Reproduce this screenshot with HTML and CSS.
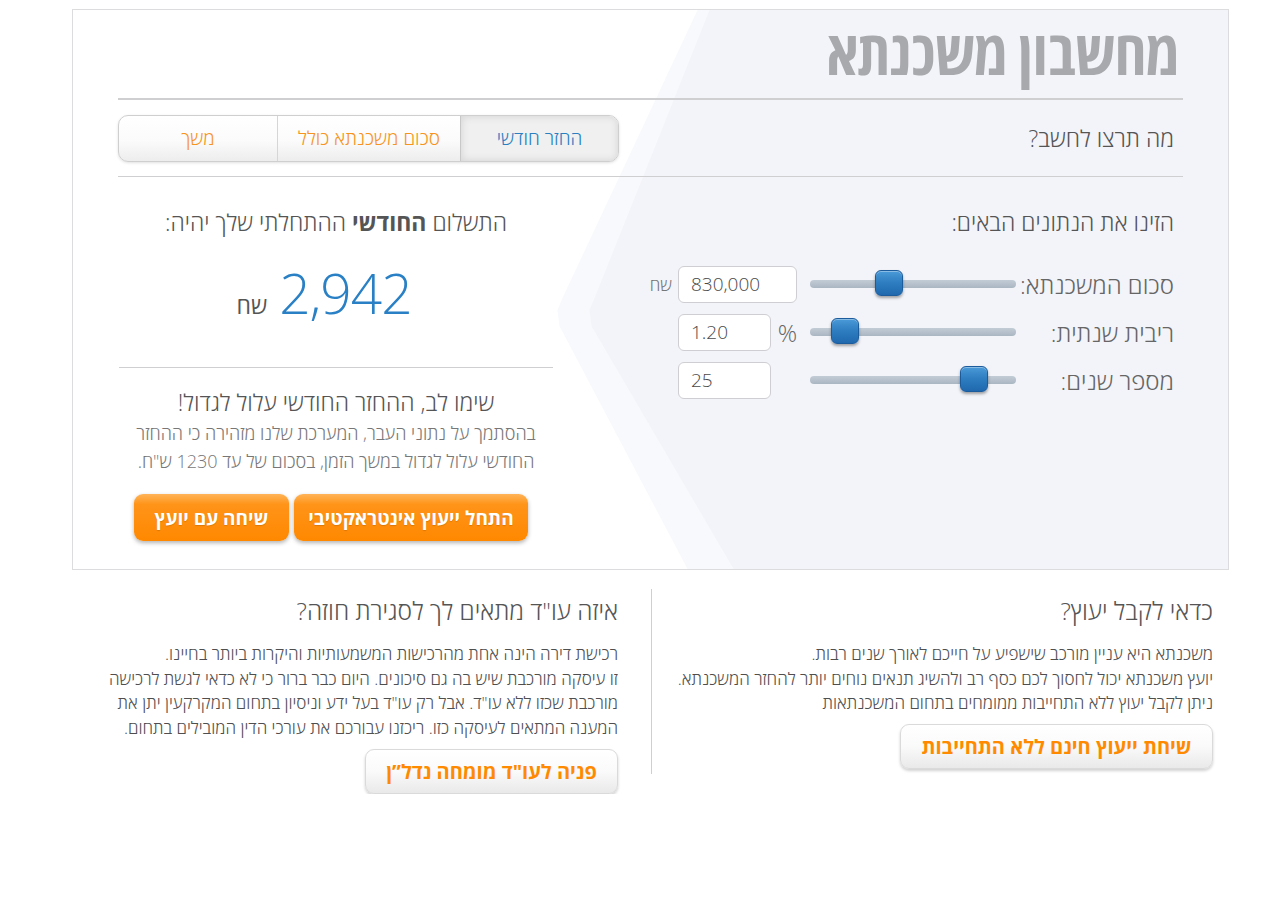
FILE: index.html
```html
<!DOCTYPE html>
<html lang="he" dir="rtl">
<head>
<meta charset="utf-8">
<title>מחשבון משכנתא</title>
<link rel="stylesheet" href="styles.css">
</head>
<body>
<div class="calc">
  <svg class="calc-bg" viewBox="0 0 1154 559" preserveAspectRatio="none" aria-hidden="true">
    <polygon points="624,0 1154,0 1154,559 614,559 486,316 484,300 490,286" fill="#f8f9fc"/>
    <polygon points="636,0 1154,0 1154,559 660,559 518,316 516,300 522,286" fill="#f3f4f9"/>
  </svg>

  <header class="calc-head">
    <h1 class="calc-title">מחשבון משכנתא</h1>
  </header>

  <div class="mode-row">
    <div class="mode-label">מה תרצו לחשב?</div>
    <div class="tabs">
      <div class="tab tab-active">החזר חודשי</div>
      <div class="tab tab-mid">סכום משכנתא כולל</div>
      <div class="tab tab-last">משך</div>
    </div>
  </div>

  <div class="calc-body">
    <section class="inputs">
      <h2 class="sec-title">הזינו את הנתונים הבאים:</h2>

      <div class="field">
        <div class="field-label">סכום המשכנתא:</div>
        <div class="slider"><div class="thumb" style="left:65px"></div></div>
        <div class="slot">
          <input class="num" type="text" value="830,000">
        </div>
        <span class="unit-small">שח</span>
      </div>

      <div class="field">
        <div class="field-label">ריבית שנתית:</div>
        <div class="slider"><div class="thumb" style="left:21px"></div></div>
        <div class="slot">
          <span class="unit-pct">%</span>
          <input class="num num-short" type="text" value="1.20">
        </div>
      </div>

      <div class="field">
        <div class="field-label">מספר שנים:</div>
        <div class="slider"><div class="thumb" style="left:150px"></div></div>
        <div class="slot slot-end">
          <input class="num num-short" type="text" value="25">
        </div>
      </div>
    </section>

    <section class="result">
      <h2 class="sec-title sec-center">התשלום <b>החודשי</b> ההתחלתי שלך יהיה:</h2>
      <div class="amount">
        <span class="amount-num">2,942</span>
        <span class="amount-cur">שח</span>
      </div>
      <div class="notice">
        <div class="notice-title">שימו לב, ההחזר החודשי עלול לגדול!</div>
        <p class="notice-text">בהסתמך על נתוני העבר, המערכת שלנו מזהירה כי ההחזר<br>החודשי עלול לגדול במשך הזמן, בסכום של עד 1230 ש"ח.</p>
        <div class="actions">
          <a class="btn-orange btn-wide" href="#">התחל ייעוץ אינטראקטיבי</a>
          <a class="btn-orange btn-narrow" href="#">שיחה עם יועץ</a>
        </div>
      </div>
    </section>
  </div>
</div>

<div class="info">
  <section class="info-col info-right">
    <h3 class="info-title">כדאי לקבל יעוץ?</h3>
    <p class="info-text">משכנתא היא עניין מורכב שישפיע על חייכם לאורך שנים רבות.<br>יועץ משכנתא יכול לחסוך לכם כסף רב ולהשיג תנאים נוחים יותר להחזר המשכנתא.<br>ניתן לקבל יעוץ ללא התחייבות ממומחים בתחום המשכנתאות</p>
    <a class="btn-white btn-consult" href="#">שיחת ייעוץ חינם ללא התחייבות</a>
  </section>
  <section class="info-col info-left">
    <h3 class="info-title">איזה עו"ד מתאים לך לסגירת חוזה?</h3>
    <p class="info-text">רכישת דירה הינה אחת מהרכישות המשמעותיות והיקרות ביותר בחיינו.<br>זו עיסקה מורכבת שיש בה גם סיכונים. היום כבר ברור כי לא כדאי לגשת לרכישה<br>מורכבת שכזו ללא עו"ד. אבל רק עו"ד בעל ידע וניסיון בתחום המקרקעין יתן את<br>המענה המתאים לעיסקה כזו. ריכזנו עבורכם את עורכי הדין המובילים בתחום.</p>
    <a class="btn-white btn-lawyer" href="#">פניה לעו"ד מומחה נדל”ן</a>
  </section>
</div>
</body>
</html>
```

FILE: styles.css
```css
* { box-sizing: border-box; }

html, body {
  margin: 0;
  padding: 0;
  background: #ffffff;
}

body {
  font-family: "Open Sans", "Noto Sans", "DejaVu Sans", sans-serif;
  color: #555;
  padding-top: 9px;
}

.calc {
  position: relative;
  width: 1157px;
  margin-left: 72px;
  margin-right: auto;
  border: 1px solid #dcdcdf;
  padding: 0 45px 28px 45px;
  background: #ffffff;
}

.calc-bg {
  position: absolute;
  left: 0;
  top: 0;
  width: 100%;
  height: 100%;
  z-index: 0;
}

.calc-head, .mode-row, .calc-body {
  position: relative;
  z-index: 1;
}

.calc-head {
  height: 90px;
  border-bottom: 2px solid #cfcfd2;
  display: flex;
  align-items: center;
  padding-right: 4px;
}

.calc-title {
  margin: 0;
  font-size: 62px;
  line-height: 80px;
  font-weight: 700;
  font-stretch: 87.5%;
  color: #a8a9ad;
  white-space: nowrap;
  padding-bottom: 6px;
}

.mode-row {
  height: 77px;
  border-bottom: 1px solid #cfcfd2;
  display: flex;
  align-items: center;
  justify-content: space-between;
}

.mode-label {
  padding-right: 9px;
  font-size: 23px;
  font-weight: 300;
  color: #555;
}

.tabs {
  display: flex;
  width: 501px;
  height: 47px;
  border: 1px solid #cfcfcf;
  border-radius: 10px;
  overflow: hidden;
  box-shadow: 0 1px 3px rgba(0,0,0,0.12);
  background: linear-gradient(#ffffff 0%, #fbfbfb 55%, #ededed 100%);
}

.tab {
  display: flex;
  align-items: center;
  justify-content: center;
  font-size: 19px;
  font-weight: 300;
  color: #f7941d;
}

.tab-active {
  width: 158px;
  color: #2a7fc0;
  background: #f0f0f0;
  box-shadow: inset 0 0 8px rgba(0,0,0,0.13);
  border-left: 1px solid #c8c8c8;
}

.tab-mid {
  width: 183px;
  border-left: 1px solid #d6d6d6;
}

.tab-last {
  flex: 1;
}

.calc-body {
  display: grid;
  grid-template-columns: 542px 434px;
  column-gap: 88px;
}

.inputs {
  padding-top: 28px;
}

.sec-title {
  margin: 0;
  padding-right: 9px;
  font-size: 23px;
  line-height: 34px;
  font-weight: 300;
  color: #555;
}

.sec-title b {
  font-weight: 700;
}

.sec-center {
  text-align: center;
  padding-right: 0;
}

.inputs .sec-title {
  margin-bottom: 21px;
}

.field {
  display: flex;
  align-items: center;
  height: 48px;
}

.field-label {
  width: 157px;
  padding-right: 9px;
  font-size: 24px;
  font-weight: 300;
  color: #666;
  white-space: nowrap;
}

.slider {
  position: relative;
  width: 206px;
  height: 8px;
  margin-right: 10px;
  border-radius: 4px;
  background: linear-gradient(#c2ccd6, #aab6c3);
}

.thumb {
  position: absolute;
  top: -10px;
  width: 28px;
  height: 26px;
  border-radius: 6px;
  border: 1px solid #1d5c9c;
  background: linear-gradient(#4b9ad8 0%, #2f7fc2 45%, #2068ae 100%);
  box-shadow: 0 2px 3px rgba(0,0,0,0.35), inset 0 1px 0 rgba(255,255,255,0.35);
}

.slot {
  display: flex;
  align-items: center;
  justify-content: space-between;
  width: 119px;
  margin-right: 13px;
}

.slot-end {
  justify-content: flex-end;
}

.num {
  display: block;
  width: 119px;
  height: 37px;
  border: 1px solid #cfcfd3;
  border-radius: 6px;
  background: #ffffff;
  font-family: inherit;
  font-size: 19px;
  font-weight: 300;
  color: #4a4a4a;
  direction: ltr;
  text-align: left;
  padding: 0 12px;
  outline: none;
}

.num-short {
  width: 93px;
}

.unit-pct {
  font-size: 24px;
  font-weight: 300;
  color: #666;
}

.unit-small {
  margin-right: 6px;
  font-size: 17px;
  font-weight: 300;
  color: #777;
}

.result {
  padding-top: 28px;
  text-align: center;
}

.amount {
  display: flex;
  justify-content: center;
  align-items: baseline;
  gap: 12px;
  margin-top: 18px;
  height: 72px;
  padding-right: 24px;
}

.amount-num {
  font-size: 55px;
  line-height: 72px;
  font-weight: 300;
  color: #2a80c5;
  letter-spacing: -1px;
}

.amount-cur {
  font-size: 23px;
  font-weight: 400;
  color: #555;
}

.notice {
  margin-top: 38px;
  border-top: 1px solid #cfcfd2;
  padding-top: 17px;
}

.notice-title {
  font-size: 23px;
  line-height: 34px;
  font-weight: 300;
  color: #555;
}

.notice-text {
  margin: 0;
  font-size: 18px;
  line-height: 28px;
  font-weight: 300;
  color: #777;
}

.actions {
  display: flex;
  justify-content: center;
  gap: 5px;
  margin-top: 19px;
  padding-right: 10px;
}

.btn-orange {
  display: flex;
  align-items: center;
  justify-content: center;
  height: 47px;
  border-radius: 9px;
  background: linear-gradient(#ffb458 0%, #ff9419 22%, #ff8800 100%);
  box-shadow: 0 2px 4px rgba(0,0,0,0.3);
  color: #ffffff;
  font-size: 19px;
  font-weight: 700;
  text-decoration: none;
  text-shadow: 0 1px 1px rgba(0,0,0,0.15);
}

.btn-wide { width: 234px; }
.btn-narrow { width: 155px; }

.info {
  display: flex;
  align-items: flex-start;
  width: 1157px;
  margin-left: 72px;
  margin-right: auto;
  margin-top: 19px;
  padding: 0 16px;
}

.info-col {
  padding-top: 5px;
}

.info-right {
  width: 562px;
  border-left: 1px solid #cfcfd2;
  padding-left: 20px;
  padding-bottom: 5px;
}

.info-left {
  flex: 1;
  padding-right: 33px;
}

.info-title {
  margin: 0;
  font-size: 24.5px;
  line-height: 34px;
  font-weight: 300;
  color: #555;
}

.info-text {
  margin: 14px 0 0 0;
  font-size: 17px;
  line-height: 24.5px;
  font-weight: 300;
  color: #4f4f4f;
  white-space: nowrap;
}

.btn-white {
  display: flex;
  align-items: center;
  justify-content: center;
  height: 45px;
  border: 1px solid #dadada;
  border-radius: 9px;
  background: linear-gradient(#ffffff 0%, #fafafa 50%, #e9e9e9 100%);
  box-shadow: 0 2px 3px rgba(0,0,0,0.18);
  color: #ff8a00;
  font-size: 20px;
  font-weight: 700;
  text-decoration: none;
}

.btn-consult {
  width: 313px;
  margin-top: 8px;
}

.btn-lawyer {
  width: 253px;
  margin-top: 9px;
}
```
